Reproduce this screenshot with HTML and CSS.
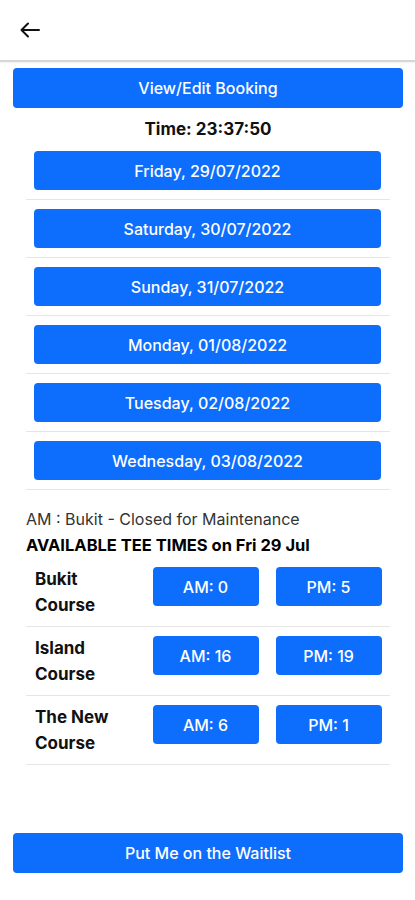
FILE: index.html
```
<!DOCTYPE html>
<html>
<head>
	<meta charset="utf-8">
	<meta name="viewport" content="width=device-width, initial-scale=1">
	<title>Tee Times</title>
	<link rel="stylesheet" href="styles.css">
</head>
<body>
	<header class="topbar">
		<button class="back" aria-label="Back">
			<svg width="20" height="16" viewBox="0 0 20 16" fill="none" stroke="#111" stroke-width="2" stroke-linecap="round" stroke-linejoin="round">
				<path d="M19 8H2"/>
				<path d="M8 1.5L1.5 8L8 14.5"/>
			</svg>
		</button>
	</header>

	<main class="page">
		<button class="btn btn-wide">View/Edit Booking</button>

		<div class="inner">
			<p class="clock">Time: 23:37:50</p>

			<ul class="dates">
				<li><button class="btn">Friday, 29/07/2022</button></li>
				<li><button class="btn">Saturday, 30/07/2022</button></li>
				<li><button class="btn">Sunday, 31/07/2022</button></li>
				<li><button class="btn">Monday, 01/08/2022</button></li>
				<li><button class="btn">Tuesday, 02/08/2022</button></li>
				<li><button class="btn">Wednesday, 03/08/2022</button></li>
			</ul>

			<div class="notice">
				<p>AM : Bukit - Closed for Maintenance</p>
				<p class="title">AVAILABLE TEE TIMES on Fri 29 Jul</p>
			</div>

			<div class="courses">
				<div class="course">
					<span class="name">Bukit Course</span>
					<div class="slot"><button class="btn">AM: 0</button></div>
					<div class="slot"><button class="btn">PM: 5</button></div>
				</div>
				<div class="course">
					<span class="name">Island Course</span>
					<div class="slot"><button class="btn">AM: 16</button></div>
					<div class="slot"><button class="btn">PM: 19</button></div>
				</div>
				<div class="course">
					<span class="name">The New Course</span>
					<div class="slot"><button class="btn">AM: 6</button></div>
					<div class="slot"><button class="btn">PM: 1</button></div>
				</div>
			</div>
		</div>

		<button class="btn btn-wide waitlist">Put Me on the Waitlist</button>
	</main>
</body>
</html>
```

FILE: styles.css
```
body{
	margin: 0px;
	background: #fff;
	color: #111;
	font-family: Inter, "Liberation Sans", Arial, sans-serif;
	font-size: 16px;
}

p{
	margin: 0px;
}

.topbar{
	height: 60px;
	display: flex;
	align-items: center;
	padding-left: 20px;
	border-bottom: 2px solid #d6d6d6;
	box-shadow: 0 1px 2px rgba(0,0,0,0.06);
}

.back{
	background: none;
	border: 0px;
	padding: 0px;
	width: 20px;
	height: 16px;
	display: block;
}

.page{
	padding: 6px 12px 0px 13px;
}

.btn{
	font: inherit;
	display: block;
	width: 100%;
	height: 39px;
	border: 0px;
	border-radius: 4px;
	background: #0d6efd;
	color: #fff;
	font-size: 16px;
	font-weight: 500;
	cursor: pointer;
}

.btn-wide{
	height: 40px;
}

.inner{
	padding: 0px 13px;
}

.clock{
	text-align: center;
	font-weight: 700;
	font-size: 17px;
	line-height: 20px;
	padding: 11px 0px 3px;
}

.dates{
	list-style: none;
	margin: 0px;
	padding: 0px;
}

.dates li{
	padding: 9px 9px 9px 8px;
	border-bottom: 1px solid #e6e6e6;
}

.notice{
	padding-top: 16px;
	line-height: 26px;
}

.notice p{
	color: #333;
}

.notice .title{
	color: #000;
	font-weight: 700;
	font-size: 16.5px;
}

.course{
	display: grid;
	grid-template-columns: 118px 1fr 1fr;
	border-bottom: 1px solid #e6e6e6;
}

.course .name{
	font-weight: 700;
	font-size: 17px;
	line-height: 26px;
	padding: 8px 22px 8px 9px;
}

.slot{
	padding: 9px 8.5px;
}

.waitlist{
	margin-top: 68px;
}
```
